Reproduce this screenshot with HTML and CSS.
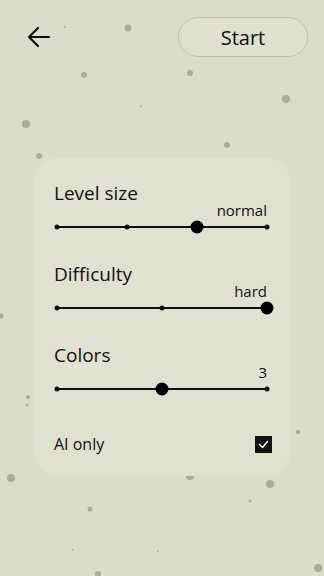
FILE: index.html
```html
<!DOCTYPE html>
<html lang="en">
<head>
  <meta charset="UTF-8">
  <meta name="viewport" content="width=device-width, initial-scale=1.0">
  <title>Game settings</title>
  <link rel="stylesheet" href="styles.css">
</head>
<body>
  <!-- background particles -->
  <div class="dots">
    <span class="dot" style="left:128px;top:28px;width:7px;height:7px"></span>
    <span class="dot" style="left:65px;top:27px;width:2px;height:2px"></span>
    <span class="dot" style="left:84px;top:75px;width:6px;height:6px"></span>
    <span class="dot" style="left:190px;top:73px;width:6px;height:6px"></span>
    <span class="dot" style="left:286px;top:99px;width:8px;height:8px"></span>
    <span class="dot" style="left:26px;top:124px;width:8px;height:8px"></span>
    <span class="dot" style="left:141px;top:106px;width:2px;height:2px"></span>
    <span class="dot" style="left:227px;top:145px;width:6px;height:6px"></span>
    <span class="dot" style="left:39px;top:156px;width:6px;height:6px"></span>
    <span class="dot" style="left:1px;top:316px;width:5px;height:5px"></span>
    <span class="dot" style="left:28px;top:397px;width:4px;height:4px"></span>
    <span class="dot" style="left:27px;top:405px;width:3px;height:3px"></span>
    <span class="dot" style="left:298px;top:432px;width:4px;height:4px"></span>
    <span class="dot" style="left:11px;top:478px;width:8px;height:8px"></span>
    <span class="dot" style="left:190px;top:476px;width:8px;height:8px"></span>
    <span class="dot" style="left:270px;top:484px;width:8px;height:8px"></span>
    <span class="dot" style="left:90px;top:509px;width:5px;height:5px"></span>
    <span class="dot" style="left:250px;top:501px;width:3px;height:3px"></span>
    <span class="dot" style="left:73px;top:550px;width:2px;height:2px"></span>
    <span class="dot" style="left:158px;top:551px;width:2px;height:2px"></span>
    <span class="dot" style="left:318px;top:568px;width:8px;height:8px"></span>
    <span class="dot" style="left:98px;top:574px;width:6px;height:6px"></span>
  </div>

  <div class="topbar">
    <button class="back" aria-label="Back">
      <svg width="24" height="22" viewBox="0 0 24 22">
        <path d="M22 11H2M11 2L2 11l9 9" fill="none" stroke="#111" stroke-width="2.2" stroke-linecap="round" stroke-linejoin="round"/>
      </svg>
    </button>
    <button class="start">Start</button>
  </div>

  <div class="panel">
    <div class="setting">
      <div class="label">Level size</div>
      <div class="value">normal</div>
      <div class="slider">
        <div class="track"></div>
        <span class="tick" style="left:0%"></span>
        <span class="tick" style="left:33.33%"></span>
        <span class="tick" style="left:100%"></span>
        <span class="thumb" style="left:66.67%"></span>
      </div>
    </div>

    <div class="setting">
      <div class="label">Difficulty</div>
      <div class="value">hard</div>
      <div class="slider">
        <div class="track"></div>
        <span class="tick" style="left:0%"></span>
        <span class="tick" style="left:50%"></span>
        <span class="thumb" style="left:100%"></span>
      </div>
    </div>

    <div class="setting">
      <div class="label">Colors</div>
      <div class="value">3</div>
      <div class="slider">
        <div class="track"></div>
        <span class="tick" style="left:0%"></span>
        <span class="tick" style="left:100%"></span>
        <span class="thumb" style="left:50%"></span>
      </div>
    </div>

    <div class="check-row">
      <span>AI only</span>
      <span class="checkbox">
        <svg width="11" height="9" viewBox="0 0 11 9">
          <path d="M1.5 4.5l3 3 5-6" fill="none" stroke="#fff" stroke-width="1.4" stroke-linecap="round" stroke-linejoin="round"/>
        </svg>
      </span>
    </div>
  </div>
</body>
</html>
```

FILE: styles.css
```css
body {
  margin: 0;
  width: 324px;
  height: 576px;
  overflow: hidden;
  position: relative;
  background-color: #dbdcca;
  font-family: "Open Sans", "Noto Sans", sans-serif;
  color: #111;
}
.dots {
  position: absolute;
  inset: 0;
}
.dot {
  position: absolute;
  border-radius: 50%;
  background-color: #abac9f;
  transform: translate(-50%, -50%);
}
.topbar {
  position: relative;
  display: flex;
  justify-content: space-between;
  align-items: center;
  padding: 17px 16px 0 27px;
}
.back {
  background: none;
  border: none;
  padding: 0;
  width: 24px;
  height: 22px;
  display: flex;
}
.start {
  width: 130px;
  height: 40px;
  border-radius: 20px;
  border: 1px solid #bfc0b2;
  background-color: #dfe0ce;
  font-family: inherit;
  font-size: 20px;
  color: #111;
  padding: 0;
}
.panel {
  position: relative;
  margin: 101px 0 0 35px;
  width: 255px;
  box-sizing: border-box;
  padding: 23px 23px 20px 19px;
  background-color: #e0e1d0;
  border-radius: 22px;
}
.setting {
  margin-bottom: 28px;
}
.label {
  font-size: 19px;
  line-height: 24px;
}
.value {
  font-size: 15px;
  line-height: 18px;
  text-align: right;
  margin-top: -4px;
}
.slider {
  position: relative;
  height: 14px;
  margin: 1px 0 0 3px;
}
.track {
  position: absolute;
  left: 0;
  right: 0;
  top: 6px;
  height: 2px;
  background-color: #111;
}
.tick {
  position: absolute;
  top: 7px;
  width: 5px;
  height: 5px;
  border-radius: 50%;
  background-color: #111;
  transform: translate(-50%, -50%);
}
.thumb {
  position: absolute;
  top: 7px;
  width: 13px;
  height: 13px;
  border-radius: 50%;
  background-color: #000;
  transform: translate(-50%, -50%);
}
.check-row {
  display: flex;
  justify-content: space-between;
  align-items: center;
  height: 24px;
  margin-top: 36px;
  font-size: 16px;
}
.checkbox {
  width: 17px;
  height: 17px;
  background-color: #111;
  display: flex;
  align-items: center;
  justify-content: center;
  margin-right: -5px;
}
```
